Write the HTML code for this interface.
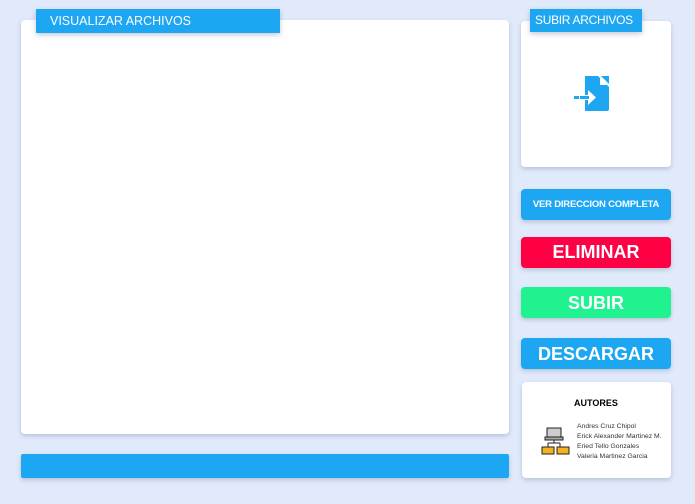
<!DOCTYPE html>
<html><head><meta charset="utf-8"><style>
*{margin:0;padding:0;box-sizing:border-box}
body{width:695px;height:504px;background:#e1eafb;font-family:"Liberation Sans",sans-serif;position:relative;overflow:hidden}
.card{position:absolute;background:#fff;border-radius:4px;box-shadow:0 2px 5px rgba(80,100,140,.3)}
.tag{position:absolute;background:#1da7f2;color:#fff;font-size:13px;box-shadow:0 2px 5px rgba(60,80,120,.3)}
.btn{position:absolute;left:521px;width:150px;border-radius:4px;color:#fff;font-weight:bold;text-align:center;box-shadow:0 2px 4px rgba(60,80,120,.25)}
</style></head><body>
<div class="card" style="left:21px;top:20px;width:488px;height:414px"></div>
<div class="tag" style="left:36px;top:9px;width:244px;height:24px;line-height:24px;padding-left:14px;font-size:12.5px">VISUALIZAR ARCHIVOS</div>
<div class="card" style="left:521px;top:21px;width:150px;height:146px"></div>
<div class="tag" style="left:530px;top:9px;width:112px;height:23px;line-height:23px;padding-left:5px;font-size:12px;letter-spacing:-0.3px">SUBIR ARCHIVOS</div>
<svg style="position:absolute;left:574px;top:76px" width="36" height="36" viewBox="0 0 36 36">
<path d="M11 0H24L35 11V33Q35 35 33 35H11Z" fill="#1da7f2"/>
<path d="M26 0L35 9H26Z" fill="#fff"/><path d="M27 0L35 8V0Z" fill="#1da7f2"/>
<rect x="0" y="20" width="5" height="3" fill="#1da7f2"/>
<rect x="5" y="19" width="10" height="5" fill="#fff"/>
<path d="M14 14L22 21.5L14 29Z" fill="#fff"/>
<rect x="6" y="20" width="9" height="3" fill="#1da7f2"/>
</svg>
<div class="btn" style="top:189px;height:31px;line-height:32px;background:#1da7f2;font-size:9.5px;letter-spacing:-0.2px">VER DIRECCION COMPLETA</div>
<div class="btn" style="top:237px;height:31px;line-height:31px;background:#ff0044;font-size:18px">ELIMINAR</div>
<div class="btn" style="top:287px;height:31px;line-height:32px;background:#1ff28f;font-size:18px">SUBIR</div>
<div class="btn" style="top:338px;height:31px;line-height:33px;background:#1da7f2;font-size:18px">DESCARGAR</div>
<div class="card" style="left:522px;top:382px;width:149px;height:96px"></div>
<div style="position:absolute;left:574px;top:398px;font-size:9px;font-weight:bold">AUTORES</div>
<div style="position:absolute;left:577px;top:422px;font-size:6.8px;line-height:10px;color:#333">Andres Cruz Chipol<br>Erick Alexander Martinez M.<br>Eried Tello Gonzales<br>Valeria Martinez Garcia</div>
<svg style="position:absolute;left:541px;top:427px" width="30" height="30" viewBox="0 0 30 30">
<rect x="6" y="1" width="14" height="9" fill="#ccc" stroke="#222" stroke-width="1"/>
<rect x="4" y="10" width="18" height="3" fill="#aaa" stroke="#222" stroke-width="1"/>
<path d="M13 13V16M7 16H19M7 16V20M19 16V20" stroke="#222" fill="none"/>
<rect x="1" y="20" width="12" height="7" fill="#f5b21e" stroke="#222"/>
<rect x="16" y="20" width="12" height="7" fill="#f5b21e" stroke="#222"/>
</svg>
<div class="card" style="left:21px;top:454px;width:488px;height:24px;background:#1da7f2;border-radius:2px"></div>
</body></html>
